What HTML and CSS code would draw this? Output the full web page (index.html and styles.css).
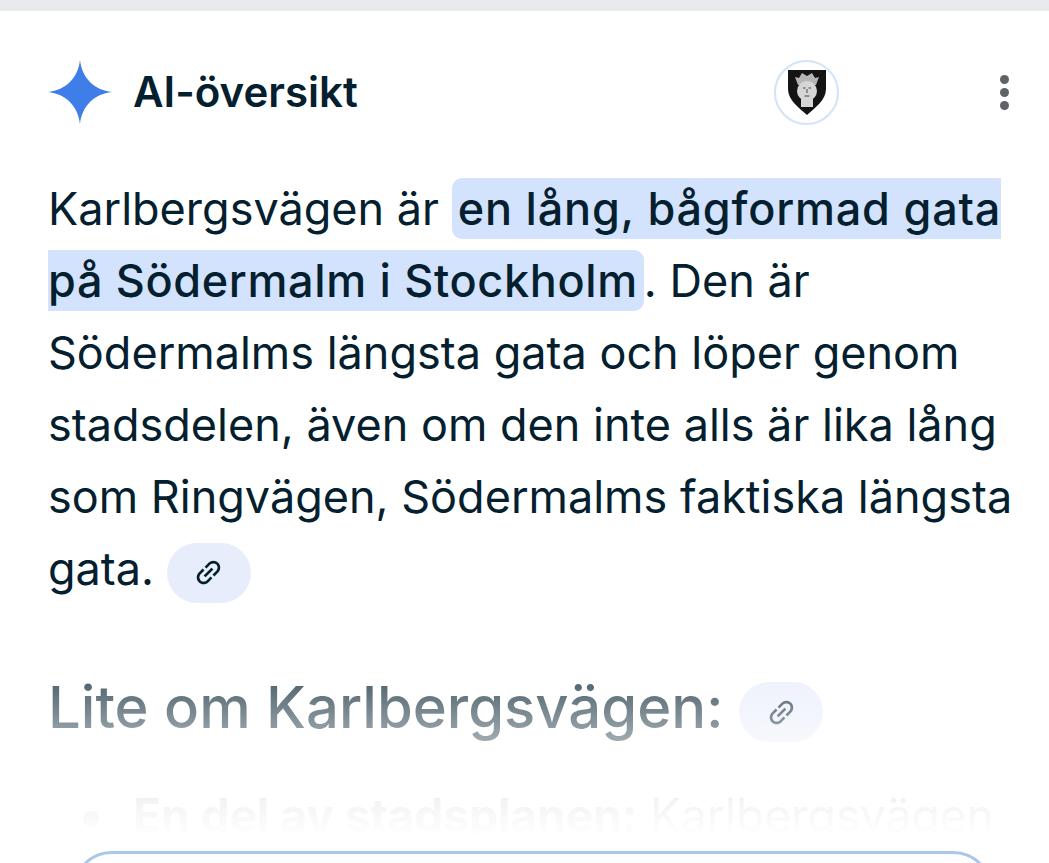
FILE: index.html
```html
<!DOCTYPE html>
<html lang="sv">
<head>
    <meta charset="UTF-8">
    <meta name="viewport" content="width=device-width, initial-scale=1.0">
    <title>AI-översikt</title>
    <link rel="stylesheet" href="styles.css">
</head>
<body>
    <div class="topbar"></div>
    <main class="overview">
        <header class="header">
            <svg class="spark" viewBox="0 0 64 64" aria-hidden="true">
                <path d="M32 0C34 18 46 30 64 32C46 34 34 46 32 64C30 46 18 34 0 32C18 30 30 18 32 0Z"/>
            </svg>
            <h2 class="title">AI-översikt</h2>
            <div class="crest">
                <svg viewBox="0 0 38 45" aria-hidden="true">
                    <path class="shield" d="M0 0H38V19C38 30 27 38 19 45C11 38 0 30 0 19Z"/>
                    <path class="crown" d="M7 7L11 8L14 3L19 6L24 3L27 8L31 7L28 15H10Z"/>
                    <ellipse class="head" cx="19" cy="21" rx="10" ry="10"/>
                    <rect class="head" x="13" y="29" width="12" height="8"/>
                    <path class="face" d="M15 18H17.500M20.500 18H23M19 19V23M16.500 26H21.500"/>
                </svg>
            </div>
            <div class="more"><span></span><span></span><span></span></div>
        </header>

        <p class="answer">Karlbergsvägen är <mark>en lång, bågformad gata<br><span class="tight">på Södermalm i Stockholm</span></mark>. Den är<br>Södermalms längsta gata och löper genom<br>stadsdelen, även om den inte alls är lika lång<br>som Ringvägen, Södermalms faktiska längsta<br>gata. <span class="link-chip"><svg viewBox="0 0 24 24"><path d="M3.900 12c0-1.710 1.390-3.100 3.100-3.100h4V7H7c-2.760 0-5 2.240-5 5s2.240 5 5 5h4v-1.900H7c-1.710 0-3.100-1.390-3.100-3.100zM8 13h8v-2H8v2zm9-6h-4v1.900h4c1.710 0 3.100 1.390 3.100 3.100s-1.390 3.100-3.100 3.100h-4V17h4c2.760 0 5-2.240 5-5s-2.240-5-5-5z"/></svg></span></p>

        <h3 class="subhead">Lite om Karlbergsvägen: <span class="link-chip"><svg viewBox="0 0 24 24"><path d="M3.900 12c0-1.710 1.390-3.100 3.100-3.100h4V7H7c-2.760 0-5 2.240-5 5s2.240 5 5 5h4v-1.900H7c-1.710 0-3.100-1.390-3.100-3.100zM8 13h8v-2H8v2zm9-6h-4v1.900h4c1.710 0 3.100 1.390 3.100 3.100s-1.390 3.100-3.100 3.100h-4V17h4c2.760 0 5-2.240 5-5s-2.240-5-5-5z"/></svg></span></h3>

        <ul class="facts">
            <li><b>En del av stadsplanen:</b> Karlbergsvägen</li>
        </ul>
    </main>
    <div class="fade"></div>
    <div class="card-clip"><div class="card"></div></div>
</body>
</html>
```

FILE: styles.css
```css
html {
    overflow: hidden;
}

body {
    margin: 0;
    height: 863px;
    overflow: hidden;
    position: relative;
    background: #fff;
    font-family: 'Inter', 'Open Sans', sans-serif;
    color: #04202f;
}

.topbar {
    height: 11px;
    background-color: #e8eaed;
}

.overview {
    height: 852px;
    overflow: hidden;
    padding: 0 34px 0 48px;
}

.header {
    display: flex;
    align-items: center;
    height: 64px;
    margin-top: 49px;
}

.spark {
    width: 64px;
    height: 64px;
    fill: #3f7ee8;
    flex-shrink: 0;
}

.title {
    margin: 0 0 2px 21px;
    font-size: 42px;
    font-weight: 600;
    flex: 1;
}

.crest {
    width: 61px;
    height: 61px;
    border: 2px solid #d3e3f8;
    border-radius: 50%;
    display: flex;
    align-items: center;
    justify-content: center;
    margin-right: 161px;
}

.crest svg {
    width: 38px;
    height: 45px;
    filter: blur(0.5px);
}

.shield {
    fill: #141414;
}

.crown {
    fill: #b5b5b5;
}

.head {
    fill: #d6d6d6;
}

.face {
    fill: none;
    stroke: #777;
    stroke-width: 1.5;
}

.more {
    display: flex;
    flex-direction: column;
    gap: 4px;
    margin-right: 6px;
}

.more span {
    width: 9px;
    height: 9px;
    border-radius: 50%;
    background-color: #5f6368;
}

.answer {
    margin: 49px 0 0;
    font-size: 45px;
    line-height: 72px;
    white-space: nowrap;
}

mark {
    background-color: #d3e3fd;
    color: #04202f;
    font-weight: 500;
    letter-spacing: 0.8px;
    padding: 3px 6px;
    border-radius: 10px;
}

.tight {
    letter-spacing: 0.65px;
}

.link-chip {
    display: inline-flex;
    align-items: center;
    justify-content: center;
    width: 84px;
    height: 60px;
    border-radius: 30px;
    background-color: #e8edfb;
    vertical-align: middle;
}

.link-chip svg {
    width: 33px;
    height: 33px;
    fill: #04202f;
    transform: rotate(-45deg);
}

.subhead {
    margin: 66px 0 0;
    font-size: 58px;
    line-height: 72px;
    font-weight: 500;
    white-space: nowrap;
}

.facts {
    margin: 36px 0 0;
    padding: 0 0 0 35px;
    list-style: none;
    font-size: 46px;
    line-height: 72px;
    white-space: nowrap;
}

.facts li::before {
    content: "";
    display: inline-block;
    width: 16px;
    height: 16px;
    margin-right: 34px;
    border-radius: 50%;
    background-color: #04202f;
    vertical-align: middle;
}

.fade {
    position: absolute;
    left: 0;
    right: 0;
    top: 640px;
    height: 223px;
    background: linear-gradient(to bottom, rgba(255, 255, 255, 0), rgba(255, 255, 255, 0.3) 18%, rgba(255, 255, 255, 0.62) 45%, rgba(255, 255, 255, 0.95) 72%, #fff 88%);
}

.card-clip {
    position: absolute;
    left: 0;
    right: 0;
    top: 851px;
    height: 12px;
    overflow: hidden;
}

.card {
    box-sizing: border-box;
    height: 80px;
    margin: 0 56px 0 72px;
    background: #fff;
    border: 3px solid #a9c7e8;
    border-radius: 44px;
}
```
